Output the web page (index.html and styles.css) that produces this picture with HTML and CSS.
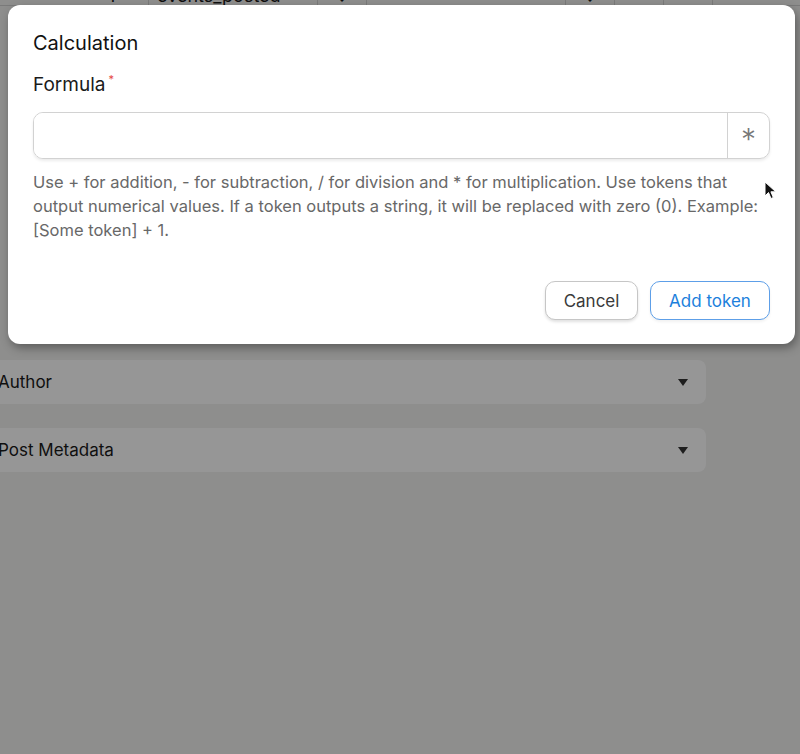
FILE: index.html
```html
<!DOCTYPE html>
<html lang="en">
<head>
  <meta charset="UTF-8">
  <title>Calculation</title>
  <link rel="stylesheet" href="styles.css">
</head>
<body>
  <!-- Page under the modal -->
  <div class="page">
    <div class="table-strip">
      <div class="cell cell-num">1</div>
      <div class="cell cell-name">events_posted</div>
      <div class="cell cell-icon">↓</div>
      <div class="cell cell-wide"></div>
      <div class="cell cell-icon">↓</div>
      <div class="cell cell-small"></div>
      <div class="cell cell-small"></div>
    </div>

    <div class="sections">
      <div class="section-row">
        <span>Author</span>
        <span class="caret"></span>
      </div>
      <div class="section-row">
        <span>Post Metadata</span>
        <span class="caret"></span>
      </div>
    </div>
  </div>

  <!-- Dark overlay -->
  <div class="overlay"></div>

  <!-- Modal -->
  <div class="modal">
    <h2 class="modal-title">Calculation</h2>
    <label class="field-label">Formula<span class="required">*</span></label>
    <div class="input-group">
      <input class="input" type="text">
      <div class="input-addon">*</div>
    </div>
    <p class="help">Use + for addition, - for subtraction, / for division and * for multiplication. Use tokens that output numerical values. If a token outputs a string, it will be replaced with zero (0). Example: [Some token] + 1.</p>
    <div class="actions">
      <button class="btn btn-cancel">Cancel</button>
      <button class="btn btn-primary">Add token</button>
    </div>
  </div>

  <!-- mouse pointer -->
  <svg class="pointer" width="14" height="20" viewBox="0 0 14 20">
    <path d="M1 1 L1 15 L4.5 11.5 L7 17.5 L9.3 16.5 L6.9 10.8 L11.8 10.8 Z" fill="#111" stroke="#fff" stroke-width="1"/>
  </svg>
</body>
</html>
```

FILE: styles.css
```css
body {
  margin: 0;
  background-color: #f1f1f0;
  font-family: Inter, "Open Sans", Arial, sans-serif;
  color: #1a1a1a;
  height: 754px;
  overflow: hidden;
  position: relative;
}

/* pagina sotto la finestra */
.page {
  width: 800px;
}
.table-strip {
  display: flex;
  height: 5px;
  overflow: hidden;
  border-bottom: 1px solid #d0d0d0;
}
.cell {
  border-right: 1px solid #cfcfcf;
  font-size: 18px;
  line-height: 18px;
  margin-top: -13px;
  padding-left: 8px;
}
.cell-num { width: 40px; margin-left: 100px; }
.cell-name { width: 160px; }
.cell-icon { width: 48px; text-align: center; padding-left: 0; }
.cell-wide { width: 190px; }
.cell-small { width: 40px; }

.sections {
  margin-top: 354px;
  display: flex;
  flex-direction: column;
  gap: 24px;
}
.section-row {
  width: 720px;
  margin-left: -14px;
  height: 44px;
  box-sizing: border-box;
  padding: 0 18px 0 12px;
  background-color: #ffffff;
  border-radius: 0 8px 8px 0;
  display: flex;
  align-items: center;
  justify-content: space-between;
  font-size: 17px;
}
.caret {
  width: 0;
  height: 0;
  border-left: 5px solid transparent;
  border-right: 5px solid transparent;
  border-top: 7px solid #333;
}

.overlay {
  position: absolute;
  top: 0;
  left: 0;
  width: 100%;
  height: 100%;
  background-color: rgba(0, 0, 0, 0.41);
}

/* finestra modale */
.modal {
  position: absolute;
  top: 5px;
  left: 8px;
  width: 787px;
  box-sizing: border-box;
  padding: 25px 25px 24px;
  background-color: #fff;
  border-radius: 12px;
  box-shadow: 2px 4px 10px rgba(0, 0, 0, 0.35);
}
.modal-title {
  margin: 0;
  font-size: 20px;
  line-height: 26px;
  font-weight: 400;
  color: #111;
}
.field-label {
  display: block;
  margin-top: 17px;
  font-size: 19px;
  line-height: 24px;
  color: #1a1a1a;
}
.required {
  color: #e5483f;
  font-size: 11px;
  vertical-align: top;
  margin-left: 3px;
  position: relative;
  top: -6px;
}
.input-group {
  margin-top: 15px;
  display: flex;
  height: 47px;
  box-sizing: border-box;
  border: 1px solid #d2d2d2;
  border-radius: 10px;
  box-shadow: 0 2px 3px rgba(0, 0, 0, 0.08);
  overflow: hidden;
}
.input {
  flex: 1;
  border: none;
  outline: none;
  font-size: 16px;
  padding: 0 14px;
}
.input-addon {
  width: 42px;
  border-left: 1px solid #d2d2d2;
  display: flex;
  align-items: center;
  justify-content: center;
  font-size: 30px;
  font-weight: 300;
  color: #777;
  padding-top: 7px;
  box-sizing: border-box;
}
.help {
  margin: 11px 0 0;
  font-size: 16.5px;
  line-height: 24px;
  color: #686868;
}
.actions {
  margin-top: 39px;
  display: flex;
  justify-content: flex-end;
  gap: 12px;
}
.btn {
  height: 39px;
  border-radius: 10px;
  background-color: #fff;
  font-family: inherit;
  font-size: 17px;
  cursor: pointer;
}
.btn-cancel {
  width: 93px;
  border: 1px solid #c6c6c6;
  color: #3a3a3a;
  box-shadow: 0 2px 3px rgba(0, 0, 0, 0.12);
}
.btn-primary {
  width: 120px;
  border: 1px solid #5d9fe8;
  color: #1c7fdc;
  box-shadow: 0 2px 3px rgba(0, 0, 0, 0.06);
}

.pointer {
  position: absolute;
  left: 764px;
  top: 181px;
}
```
